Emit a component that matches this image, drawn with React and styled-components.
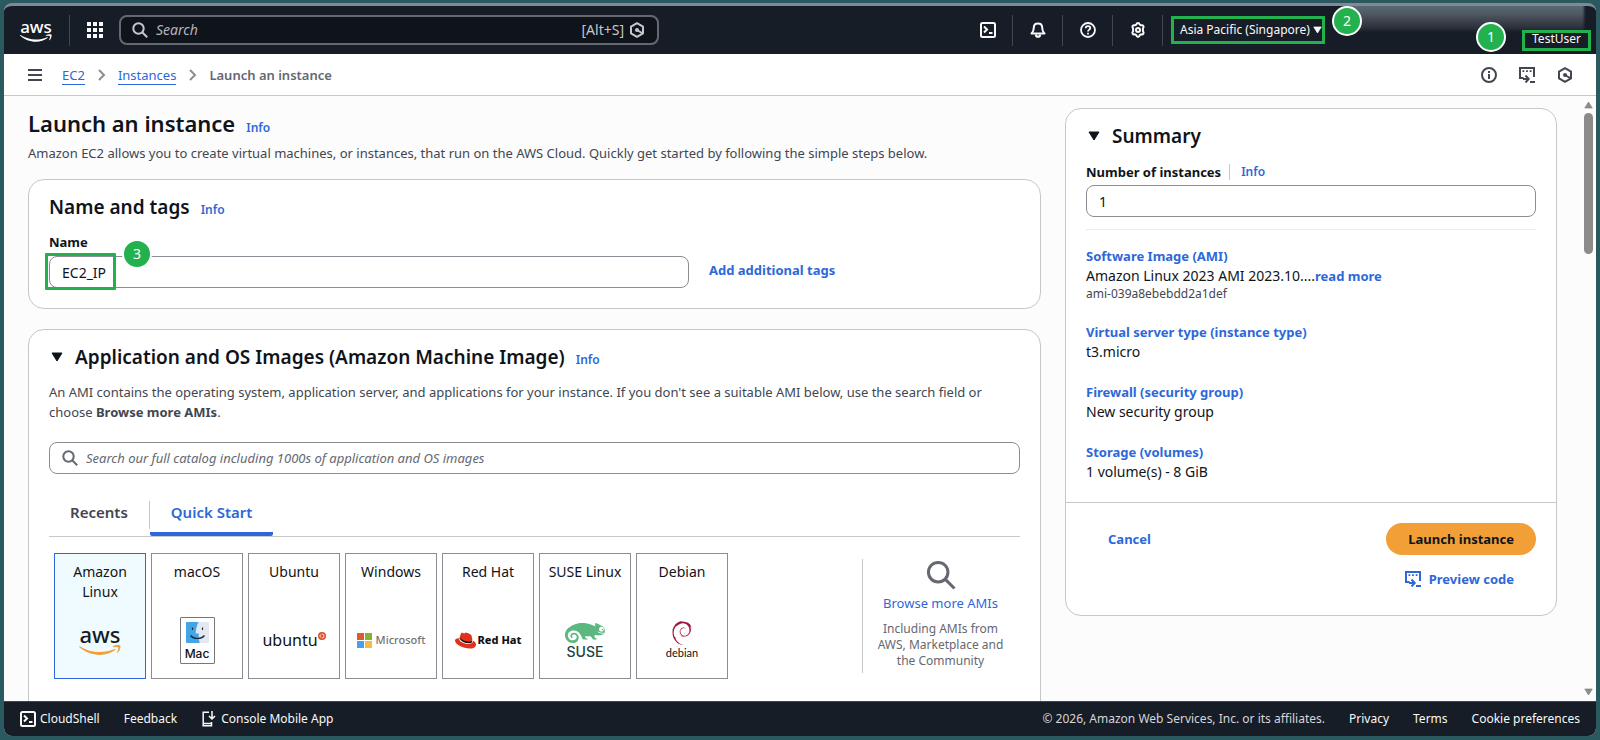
import React from 'react';
import styled, { createGlobalStyle } from 'styled-components';
import { SiSuse, SiRedhat, SiDebian } from 'react-icons/si';

const blue = '#2e68d8';
const line = '#c6c6cd';
const grey = '#8c8c94';
const green = '#22b14c';
const ink = '#0f141a';
const muted = '#424650';
const navy = '#161d26';
const sans = `"Noto Sans", "Open Sans", sans-serif`;

const GlobalStyle = createGlobalStyle`
  *, *::before, *::after { box-sizing: border-box; }
  body { margin: 0; background: #2a5a60; color: ${ink}; font: 400 14px/20px ${sans}; }
  button, input { font: inherit; color: inherit; }
  button { padding: 0; border: 0; background: none; cursor: pointer; }
  a { color: ${blue}; text-decoration: none; }
  h1, h2, p, ul { margin: 0; padding: 0; }
  svg { display: block; flex: none; }
`;

const Desktop = styled.div`
  height: 100vh;
  padding: 3px 4px 4px;
  display: flex;
`;

const Window = styled.div`
  flex: 1;
  min-width: 0;
  display: flex;
  flex-direction: column;
  border-top: 3px solid #7e8a96;
  border-radius: 8px;
  background: #fcfcfd;
  overflow: hidden;
`;

/* ---------- top bar ---------- */
const TopBar = styled.header`
  position: relative;
  flex: none;
  height: 48px;
  display: flex;
  align-items: center;
  background: ${navy};
  color: #f9f9fa;
`;

const Rule = styled.span`
  width: 1px;
  height: 31px;
  background: #424650;
`;

const HomeLink = styled.a`
  padding: 0 17px 0 16px;
  color: #fff;
`;

const IconButton = styled.button`
  width: ${(p) => p.$width || 49}px;
  height: 40px;
  display: flex;
  align-items: center;
  justify-content: center;
  color: inherit;
`;

const GlobalSearch = styled.label`
  flex: 0 1 540px;
  height: 30px;
  display: flex;
  align-items: center;
  gap: 8px;
  padding: 0 12px 0 11px;
  border: 2px solid #656871;
  border-radius: 8px;
  background: ${ink};
  color: #c6c6cd;
`;

const SearchInput = styled.input`
  flex: 1;
  min-width: 0;
  padding: 0;
  border: 0;
  outline: 0;
  background: none;
  font-size: ${(p) => p.$size || 14}px;
  &::placeholder { color: ${(p) => p.$tint}; font-style: italic; opacity: 1; }
`;

const Shortcut = styled.span`
  display: flex;
  align-items: center;
  gap: 5px;
`;

const Tools = styled.div`
  align-self: stretch;
  margin-left: auto;
  display: flex;
  align-items: center;
`;

const Region = styled.button`
  position: relative;
  width: 154px;
  height: 28px;
  margin-left: 8px;
  padding: 0 0 0 6px;
  border: 3px solid ${green};
  display: flex;
  align-items: center;
  gap: 3px;
  font-size: 12px;
  line-height: 16px;
  white-space: nowrap;
`;

const Account = styled.div`
  align-self: stretch;
  width: 271px;
  padding: 24px 5px 0 0;
  display: flex;
  justify-content: flex-end;
  align-items: flex-start;
`;

const UserButton = styled.button`
  position: relative;
  width: 69px;
  height: 21px;
  padding-bottom: 4px;
  border: 3px solid ${green};
  font-size: 12px;
  line-height: 12px;
`;

const Redaction = styled.div`
  position: absolute;
  top: -5px;
  right: 12px;
  width: 240px;
  height: 30px;
  background: linear-gradient(#5e7782, #4f5660 45%, #22272f);
  filter: blur(1px);
`;

const Badge = styled.span`
  position: absolute;
  left: ${(p) => p.$left}px;
  top: ${(p) => p.$top}px;
  width: 30px;
  height: 30px;
  border: 2px solid #fff;
  border-radius: 50%;
  background: ${green};
  color: #fff;
  font: 400 14px/26px ${sans};
  text-align: center;
`;

/* ---------- breadcrumb bar ---------- */
const CrumbBar = styled.nav`
  flex: none;
  height: 42px;
  display: flex;
  align-items: center;
  padding: 0 12px 0 14px;
  border-bottom: 1px solid ${line};
  background: #fff;
  color: ${muted};
`;

const Crumbs = styled.ol`
  margin: 0 0 0 10px;
  padding: 0;
  list-style: none;
  display: flex;
  align-items: center;
  gap: 12px;
`;

const Crumb = styled.li`
  display: flex;
  align-items: center;
  gap: 13px;
  color: ${(p) => (p.$current ? '#656871' : grey)};
  font-size: 13px;
  font-weight: ${(p) => (p.$current ? 600 : 400)};
  a { padding-top: 1px; border-bottom: 1px solid ${blue}; line-height: 18px; }
`;

/* ---------- page ---------- */
const Body = styled.div`
  flex: 1;
  min-height: 0;
  display: flex;
  overflow: hidden;
`;

const Content = styled.main`
  flex: 1;
  min-width: 0;
  padding: 12px 24px 0;
  display: grid;
  grid-template-columns: minmax(0, 1fr) 492px;
  align-items: start;
  gap: 24px;
`;

const Rail = styled.div`
  width: 15px;
  padding: 5px 3px;
  display: flex;
  flex-direction: column;
  align-items: center;
  gap: 4px;
  color: #8b8b8b;
`;

const Thumb = styled.div`
  width: 9px;
  height: 141px;
  margin-bottom: auto;
  border-radius: 5px;
  background: #8b8b8b;
`;

const PageHead = styled.div`
  padding-bottom: 16px;
`;

const TitleRow = styled.div`
  display: flex;
  align-items: baseline;
  gap: 11px;
`;

const PageTitle = styled.h1`
  font-size: 22px;
  line-height: 30px;
  font-weight: 600;
`;

const Title = styled.h2`
  font-size: 19px;
  line-height: 24px;
  font-weight: 600;
`;

const InfoLink = styled.a`
  font-size: 12px;
  line-height: 16px;
  font-weight: 600;
`;

const Description = styled.p`
  margin-top: ${(p) => p.$top}px;
  color: ${muted};
  font-size: 13px;
  line-height: 20px;
`;

const Card = styled.section`
  border: 1px solid ${line};
  border-radius: 16px;
  background: #fff;
  & + & { margin-top: 20px; }
`;

const CardBody = styled.div`
  padding: 15px 20px 20px;
`;

const ExpandTitle = styled.div`
  display: flex;
  align-items: center;
  gap: 12px;
  padding-left: 2px;
`;

const Label = styled.label`
  font-size: 13px;
  line-height: 20px;
  font-weight: 700;
`;

const NameField = styled.div`
  margin-top: 13px;
  display: flex;
  flex-direction: column;
  align-items: flex-start;
  gap: 4px;
`;

const NameRow = styled.div`
  width: 100%;
  display: flex;
  align-items: center;
  gap: 20px;
  > a { padding-bottom: 4px; }
`;

const Marked = styled.div`
  position: relative;
  flex: 0 1 640px;
`;

const TextInput = styled.input`
  display: block;
  width: 100%;
  height: 32px;
  padding: 0 12px;
  border: 1px solid ${grey};
  border-radius: 8px;
  background: #fff;
`;

const Highlight = styled.span`
  position: absolute;
  left: -4px;
  top: -3px;
  width: 71px;
  height: 37px;
  border: 3px solid ${green};
  border-radius: 1px;
`;

const TextAction = styled.a`
  display: inline-flex;
  align-items: center;
  gap: 8px;
  font-size: 13px;
  line-height: 20px;
  font-weight: 700;
`;

const CatalogSearch = styled.label`
  height: 32px;
  margin-top: 20px;
  padding: 0 12px;
  display: flex;
  align-items: center;
  gap: 8px;
  border: 1px solid ${grey};
  border-radius: 8px;
  color: #656871;
`;

const TabList = styled.div`
  margin-top: 20px;
  display: flex;
  align-items: center;
  border-bottom: 1px solid ${line};
`;

const Tab = styled.button`
  height: 42px;
  padding: 0 21px 2px;
  color: ${(p) => (p.$active ? blue : muted)};
  font-size: 15px;
  font-weight: 600;
  border-bottom: 4px solid ${(p) => (p.$active ? blue : 'transparent')};
  border-radius: 2px;
`;

const TabRule = styled.span`
  width: 1px;
  height: 28px;
  background: ${line};
`;

const Picker = styled.div`
  padding: 16px 0 20px 5px;
  display: flex;
  align-items: center;
  justify-content: space-between;
`;

const Tiles = styled.div`
  display: flex;
  gap: 5px;
`;

const Tile = styled.button`
  width: 92px;
  height: 126px;
  padding: 8px 8px 14px;
  display: flex;
  flex-direction: column;
  align-items: center;
  border: 1px solid ${(p) => (p.$active ? blue : grey)};
  background: ${(p) => (p.$active ? '#f0fbff' : '#fff')};
  line-height: 20px;
  white-space: ${(p) => (p.$active ? 'normal' : 'nowrap')};
`;

const LogoSlot = styled.span`
  height: 48px;
  margin-top: auto;
  display: flex;
  align-items: center;
  justify-content: center;
`;

const Stack = styled.span`
  display: inline-flex;
  flex-direction: column;
  align-items: center;
  gap: ${(p) => p.$gap || 0}px;
`;

const Inline = styled.span`
  display: inline-flex;
  align-items: ${(p) => p.$align || 'center'};
  gap: ${(p) => p.$gap || 0}px;
`;

const Wordmark = styled.span`
  color: ${(p) => p.$color || '#111'};
  font-family: ${(p) => p.$family || sans};
  font-size: ${(p) => p.$size}px;
  line-height: ${(p) => p.$line}px;
  font-weight: ${(p) => p.$weight || 400};
`;

const MacFrame = styled.span`
  width: 35px;
  height: 47px;
  padding: 4px 0 0;
  display: flex;
  flex-direction: column;
  align-items: center;
  gap: 4px;
  border: 1px solid #777;
  border-radius: 1px;
  background: #fff;
`;

const Browse = styled.div`
  width: 158px;
  height: 114px;
  padding: 1px 2px 0 0;
  display: flex;
  flex-direction: column;
  align-items: center;
  border-left: 1px solid ${line};
  color: #656871;
  font-size: 12px;
  line-height: 16px;
  text-align: center;
  a { margin: 3px 0 8px; font-size: 13px; line-height: 20px; }
`;

const LabelRow = styled.div`
  margin: 14px 0 3px;
  display: flex;
  align-items: center;
`;

const LabelInfo = styled(InfoLink)`
  margin-left: 8px;
  padding-left: 11px;
  border-left: 1px solid ${line};
`;

const Divider = styled.hr`
  height: 1px;
  margin: 12px 0 16px;
  border: 0;
  background: #ebebf0;
`;

const Facts = styled.ul`
  list-style: none;
  display: flex;
  flex-direction: column;
  gap: 20px;
`;

const Fact = styled.li`
  display: flex;
  flex-direction: column;
  small { color: ${muted}; font-size: 12px; line-height: 16px; }
  b { color: ${blue}; font-size: 13px; }
  > a { font-size: 13px; font-weight: 700; }
`;

const CardFoot = styled.div`
  padding: 20px 20px 26px 42px;
  display: flex;
  justify-content: space-between;
  border-top: 1px solid ${line};
`;

const FootActions = styled.div`
  display: flex;
  flex-direction: column;
  align-items: flex-end;
  gap: 14px;
`;

const CancelLink = styled(TextAction)`
  height: 32px;
`;

const PreviewLink = styled(TextAction)`
  margin-right: 22px;
`;

const Primary = styled.button`
  height: 32px;
  padding: 0 22px;
  border-radius: 16px;
  background: #f29f38;
  font-size: 13px;
  font-weight: 700;
`;

/* ---------- footer ---------- */
const FootBar = styled.footer`
  flex: none;
  height: 35px;
  padding: 0 16px;
  display: flex;
  align-items: center;
  gap: 24px;
  border-top: 1px solid #424650;
  background: ${navy};
  color: #d5d5da;
  font-size: 12px;
  line-height: 16px;
  white-space: nowrap;
  a { display: inline-flex; align-items: center; gap: 4px; color: #f9f9fa; }
`;

const Legal = styled.span`
  margin-left: auto;
`;

/* ---------- drawings ---------- */
const Svg = ({ size = 16, w, h, box = '0 0 16 16', sw = 2, children }) => (
  <svg width={w || size} height={h || size} viewBox={box} fill="none" stroke="currentColor" strokeWidth={sw} aria-hidden="true">
    {children}
  </svg>
);
const SearchIcon = ({ size = 16, sw = 2 }) => (
  <Svg size={size} sw={sw}><circle cx="6.5" cy="6.5" r="5.2" /><path d="m10.2 10.2 5 5" /></Svg>
);
const GridIcon = () => (
  <Svg>{[0, 6, 12].flatMap((y) => [0, 6, 12].map((x) => <rect key={`${x}-${y}`} x={x} y={y} width="4" height="4" fill="currentColor" stroke="none" />))}</Svg>
);
const HexIcon = () => (
  <Svg><path d="M8 1.200 14 4.600v6.800L8 14.800 2 11.400V4.600z" strokeLinejoin="round" /><path d="m8 8 5 3" /><circle cx="8" cy="8" r="2" fill="currentColor" stroke="none" /></Svg>
);
const ShellIcon = () => (
  <Svg><rect x="1" y="1" width="14" height="14" rx="1.5" /><path d="m4 4.500 3 3L4 10.500M9 11h3.500" /></Svg>
);
const BellIcon = () => (
  <Svg><path d="M8 1.500c-2.500 0-4.200 1.800-4.200 4.200 0 3-.8 4.300-2.300 5.800h13c-1.500-1.500-2.300-2.800-2.300-5.800C12.200 3.300 10.500 1.500 8 1.500z" strokeLinejoin="round" /><path d="M5.800 12.500c.2 1.500 1 2.300 2.200 2.300s2-.8 2.200-2.300" /></Svg>
);
const HelpIcon = () => (
  <Svg sw={1.8}><circle cx="8" cy="8" r="7" /><path d="M5.700 6.300C5.700 5 6.600 4.100 8 4.100s2.300.9 2.300 2C10.300 7.600 8 7.700 8 9.600M8 10.800v1.700" /></Svg>
);
const GearIcon = () => (
  <Svg><path d="M6.300 2.600C6.600 1.500 7 1 8 1s1.400.5 1.700 1.600l1.300.7c1.100-.3 1.900-.1 2.400.7s.3 1.500-.5 2.400v2.800c.8.900 1 1.600.5 2.400s-1.300 1-2.400.7l-1.300.8C9.400 14.500 9 15 8 15s-1.400-.5-1.700-1.900L5 12.300c-1.100.3-1.900.1-2.400-.7s-.3-1.500.5-2.400V6.400C2.300 5.500 2.100 4.800 2.600 4s1.300-1 2.400-.7z" strokeLinejoin="round" /><circle cx="8" cy="8" r="2" /></Svg>
);
const InfoIcon = () => (
  <Svg><circle cx="8" cy="8" r="7" /><path d="M8 7v5M8 4v2" /></Svg>
);
const CodeIcon = () => (
  <Svg><path d="M4.500 11H1V1h14v9M11 15h5" /><path d="M3.500 4.200H5.300M7.100 4.200h1.800M10.700 4.200h1.800" strokeWidth="1.800" /><path d="M4 12h5M6.500 8.500 9.700 12l-3.200 3.500" /></Svg>
);
const MenuIcon = () => <Svg size={14} box="0 0 14 14"><path d="M0 2h14M0 7h14M0 12h14" /></Svg>;
const ChevronIcon = () => <Svg w={8} h={12} box="0 0 8 12"><path d="m1 1 5 5-5 5" /></Svg>;
const Caret = ({ w = 12, h = 10, up }) => (
  <svg width={w} height={h} viewBox="0 0 12 10" aria-hidden="true">
    <path d={up ? 'M1 9h10L6 1z' : 'M1 1h10L6 9z'} fill="currentColor" stroke="currentColor" strokeLinejoin="round" />
  </svg>
);
const MobileIcon = () => (
  <Svg sw={1.5}><path d="M8 1.200H2.200v13.600h8.300V11M2.500 12.500h8M11 0v8M8 5l3 3 3-3" /></Svg>
);
const Smile = ({ w, h, color }) => (
  <svg width={w} height={h} viewBox="0 0 42 10" fill={color} aria-hidden="true">
    <path d="M.5 1.200C7 5.200 13.500 7 20.500 7c5.500 0 10.500-1.100 15-3 .8-.3 1.400.5.700 1.100C32.200 8.200 26.400 9.900 21 9.900 13 9.900 5.700 6.900.3 2c-.4-.5-.2-1 .2-.8z" />
    <path d="M34 1.200c2-1.300 6.500-1.500 7.300-.6.600 1-.3 5.300-2.500 7.200-.4.300-.8.100-.6-.3.600-1.500 1.500-4.100 1-4.900-.5-.8-3.200-.5-4.800-.4-.6.100-.9-.6-.4-1z" />
  </svg>
);
const FinderIcon = () => (
  <svg width="23" height="21" viewBox="0 0 23 21" aria-hidden="true">
    <rect width="23" height="21" rx="1" fill="#e4e8f0" />
    <path d="M0 1a1 1 0 0 1 1-1h11.500C10.500 4 9.800 8 9.700 11.500h3c0 3.500.2 6.500 1 9.500H1a1 1 0 0 1-1-1z" fill="#42a5e6" />
    <path d="M6.500 5.500v2.500M16.500 5.500v2.500M4.500 13.500c3.500 4 10.500 4 14 0" fill="none" stroke="#1d2a3c" strokeWidth="1.200" />
  </svg>
);
const UbuntuRing = () => (
  <svg width="8" height="8" viewBox="0 0 8 8" aria-hidden="true">
    <circle cx="4" cy="4" r="4" fill="#dd4f26" />
    <circle cx="4" cy="4" r="2" fill="none" stroke="#fff" strokeWidth=".9" strokeDasharray="3.200 1" />
  </svg>
);
const WindowsPanes = () => (
  <svg width="15" height="15" viewBox="0 0 15 15" aria-hidden="true">
    <rect width="7" height="7" fill="#e0582f" /><rect x="8" width="7" height="7" fill="#86b431" />
    <rect y="8" width="7" height="7" fill="#48a0e8" /><rect x="8" y="8" width="7" height="7" fill="#f5bb42" />
  </svg>
);
const RedHatIcon = () => (
  <svg width="21" height="17" viewBox="0 0 21 17" aria-hidden="true">
    <path d="M4.500 6.500c2 3.500 7 5.500 12 4.500l.5-2-12-4z" fill="#111" />
    <SiRedhat x={0} y={-2} size={21} color="#e0301e" />
  </svg>
);
const Chameleon = () => (
  <svg width="40" height="22" viewBox="0 0 40 22" aria-hidden="true">
    <SiSuse x={0} y={-9} size={40} color="#5cb880" />
  </svg>
);

const AwsMark = ({ tile }) => (
  <Stack $gap={tile ? 1 : 0}>
    <Wordmark $color={tile ? navy : '#fff'} $size={tile ? 22 : 17} $line={tile ? 19 : 14} $weight={500}>aws</Wordmark>
    <Smile w={tile ? 42 : 32} h={tile ? 10 : 8} color={tile ? '#f29f38' : '#fff'} />
  </Stack>
);

const systems = [
  { name: 'Amazon Linux', active: true, logo: <AwsMark tile /> },
  { name: 'macOS', logo: <MacFrame><FinderIcon /><Wordmark $size={12} $line={14} $weight={500} $family="Inter, sans-serif">Mac</Wordmark></MacFrame> },
  { name: 'Ubuntu', logo: <Inline $align="flex-start"><Wordmark $size={16} $line={17}>ubuntu</Wordmark><UbuntuRing /></Inline> },
  { name: 'Windows', logo: <Inline $gap={4}><WindowsPanes /><Wordmark $size={11} $line={16} $weight={500} $color="#737373">Microsoft</Wordmark></Inline> },
  { name: 'Red Hat', logo: <Inline $gap={2}><RedHatIcon /><Wordmark $size={11} $line={14} $weight={800}>Red Hat</Wordmark></Inline> },
  { name: 'SUSE Linux', logo: <Stack><Chameleon /><Wordmark $size={14} $line={15} $weight={500} $family="Inter, sans-serif" $color="#24443f">SUSE</Wordmark></Stack> },
  { name: 'Debian', logo: <Stack $gap={2}><SiDebian size={24} color="#a3173f" /><Wordmark $size={11} $line={12} $family="Lato, sans-serif">debian</Wordmark></Stack> },
];

const facts = [
  { title: 'Virtual server type (instance type)', value: 't3.micro' },
  { title: 'Firewall (security group)', value: 'New security group' },
  { title: 'Storage (volumes)', value: '1 volume(s) - 8 GiB' },
];

export default function App() {
  return (
    <>
      <GlobalStyle />
      <Desktop>
        <Window>
          <TopBar>
            <HomeLink href="#" aria-label="AWS home"><AwsMark /></HomeLink>
            <Rule />
            <IconButton aria-label="Services"><GridIcon /></IconButton>
            <GlobalSearch>
              <SearchIcon />
              <SearchInput type="search" placeholder="Search" aria-label="Search" $tint="#b4b4bb" />
              <Shortcut>[Alt+S]<HexIcon /></Shortcut>
            </GlobalSearch>
            <Tools>
              <IconButton aria-label="CloudShell"><ShellIcon /></IconButton>
              <Rule />
              <IconButton aria-label="Notifications"><BellIcon /></IconButton>
              <Rule />
              <IconButton aria-label="Help"><HelpIcon /></IconButton>
              <Rule />
              <IconButton aria-label="Settings"><GearIcon /></IconButton>
              <Rule />
              <Redaction />
              <Region>
                Asia Pacific (Singapore)<Caret w={9} h={8} />
                <Badge $left={158} $top={-13}>2</Badge>
              </Region>
              <Account>
                <UserButton>TestUser<Badge $left={-49} $top={-11}>1</Badge></UserButton>
              </Account>
            </Tools>
          </TopBar>

          <CrumbBar aria-label="Breadcrumb">
            <IconButton $width={34} aria-label="Open navigation"><MenuIcon /></IconButton>
            <Crumbs>
              <Crumb><a href="#">EC2</a><ChevronIcon /></Crumb>
              <Crumb><a href="#">Instances</a><ChevronIcon /></Crumb>
              <Crumb $current>Launch an instance</Crumb>
            </Crumbs>
            <Tools>
              <IconButton $width={38} aria-label="Info"><InfoIcon /></IconButton>
              <IconButton $width={38} aria-label="Preview code"><CodeIcon /></IconButton>
              <IconButton $width={38} aria-label="Amazon Q"><HexIcon /></IconButton>
            </Tools>
          </CrumbBar>

          <Body>
            <Content>
              <div>
                <PageHead>
                  <TitleRow>
                    <PageTitle>Launch an instance</PageTitle>
                    <InfoLink href="#">Info</InfoLink>
                  </TitleRow>
                  <Description $top={5}>
                    Amazon EC2 allows you to create virtual machines, or instances, that run on the AWS Cloud. Quickly get started by following the simple steps below.
                  </Description>
                </PageHead>

                <Card>
                  <CardBody>
                    <TitleRow>
                      <Title>Name and tags</Title>
                      <InfoLink href="#">Info</InfoLink>
                    </TitleRow>
                    <NameField>
                      <Label htmlFor="name">Name</Label>
                      <NameRow>
                        <Marked>
                          <TextInput id="name" type="text" defaultValue="EC2_IP" />
                          <Highlight />
                          <Badge $left={73} $top={-17}>3</Badge>
                        </Marked>
                        <TextAction href="#">Add additional tags</TextAction>
                      </NameRow>
                    </NameField>
                  </CardBody>
                </Card>

                <Card>
                  <CardBody>
                    <ExpandTitle>
                      <Caret />
                      <TitleRow>
                        <Title>Application and OS Images (Amazon Machine Image)</Title>
                        <InfoLink href="#">Info</InfoLink>
                      </TitleRow>
                    </ExpandTitle>
                    <Description $top={13}>
                      An AMI contains the operating system, application server, and applications for your instance. If you don't see a suitable AMI below, use the search field or choose <b>Browse more AMIs</b>.
                    </Description>
                    <CatalogSearch>
                      <SearchIcon />
                      <SearchInput type="search" $size={13} $tint="#656871" aria-label="Search AMI catalog" placeholder="Search our full catalog including 1000s of application and OS images" />
                    </CatalogSearch>
                    <TabList role="tablist">
                      <Tab role="tab">Recents</Tab>
                      <TabRule />
                      <Tab role="tab" aria-selected="true" $active>Quick Start</Tab>
                    </TabList>
                    <Picker>
                      <Tiles>
                        {systems.map((s) => (
                          <Tile key={s.name} $active={s.active} aria-pressed={!!s.active}>
                            {s.name}
                            <LogoSlot>{s.logo}</LogoSlot>
                          </Tile>
                        ))}
                      </Tiles>
                      <Browse>
                        <SearchIcon size={30} sw={1.6} />
                        <a href="#">Browse more AMIs</a>
                        <span>Including AMIs from<br />AWS, Marketplace and<br />the Community</span>
                      </Browse>
                    </Picker>
                  </CardBody>
                </Card>
              </div>

              <Card>
                <CardBody>
                  <ExpandTitle><Caret /><Title>Summary</Title></ExpandTitle>
                  <LabelRow>
                    <Label htmlFor="count">Number of instances</Label>
                    <LabelInfo href="#">Info</LabelInfo>
                  </LabelRow>
                  <TextInput id="count" type="text" inputMode="numeric" defaultValue="1" />
                  <Divider />
                  <Facts>
                    <Fact>
                      <a href="#">Software Image (AMI)</a>
                      <span>Amazon Linux 2023 AMI 2023.10....<b>read more</b></span>
                      <small>ami-039a8ebebdd2a1def</small>
                    </Fact>
                    {facts.map((f) => (
                      <Fact key={f.title}><a href="#">{f.title}</a><span>{f.value}</span></Fact>
                    ))}
                  </Facts>
                </CardBody>
                <CardFoot>
                  <CancelLink href="#">Cancel</CancelLink>
                  <FootActions>
                    <Primary>Launch instance</Primary>
                    <PreviewLink href="#"><CodeIcon />Preview code</PreviewLink>
                  </FootActions>
                </CardFoot>
              </Card>
            </Content>
            <Rail>
              <Caret up w={9} h={8} />
              <Thumb />
              <Caret w={9} h={8} />
            </Rail>
          </Body>

          <FootBar>
            <a href="#"><ShellIcon />CloudShell</a>
            <a href="#">Feedback</a>
            <a href="#"><MobileIcon />Console Mobile App</a>
            <Legal>© 2026, Amazon Web Services, Inc. or its affiliates.</Legal>
            <a href="#">Privacy</a>
            <a href="#">Terms</a>
            <a href="#">Cookie preferences</a>
          </FootBar>
        </Window>
      </Desktop>
    </>
  );
}
